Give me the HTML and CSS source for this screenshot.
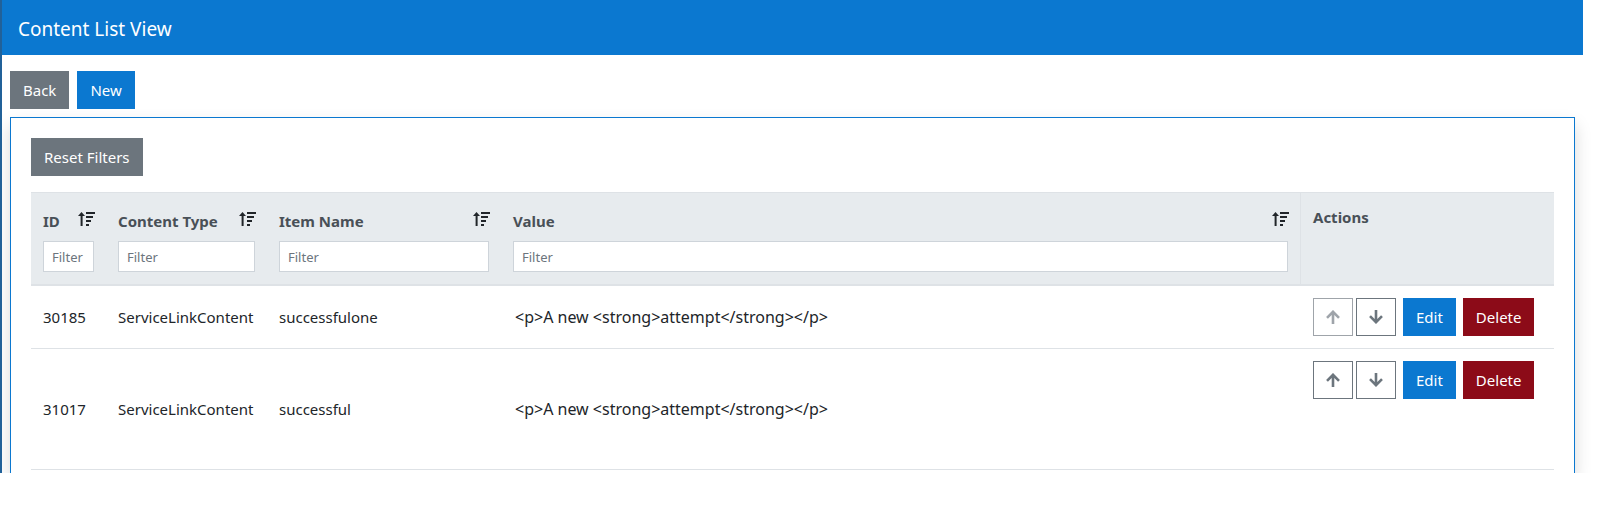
FILE: index.html
```
<!DOCTYPE html>
<html lang="en">
<head>
    <meta charset="UTF-8">
    <meta name="viewport" content="width=device-width, initial-scale=1.0">
    <title>Content List View</title>
    <link rel="stylesheet" href="styles.css">
</head>
<body>

    <svg class="sprite" aria-hidden="true">
        <symbol id="icon-sort" viewBox="0 0 18 14">
            <path d="M3.5 0 L7 4 H4.6 V14 H2.6 V4 H0 Z"/>
            <path d="M8 0 H17 V2 H8 Z M8 4 H15 V6 H8 Z M8 8 H13 V10 H8 Z M8 12 H11 V14 H8 Z"/>
        </symbol>
        <symbol id="icon-up" viewBox="0 0 14 14">
            <path d="M7 14 V1.8 M1 7.8 L7 1.8 L13 7.8" fill="none" stroke="currentColor" stroke-width="2.6"/>
        </symbol>
        <symbol id="icon-down" viewBox="0 0 14 14">
            <path d="M7 0 V12.2 M1 6.2 L7 12.2 L13 6.2" fill="none" stroke="currentColor" stroke-width="2.6"/>
        </symbol>
    </svg>

    <div class="page">
        <header class="page-header">
            <h1>Content List View</h1>
        </header>

        <main class="content">
            <div class="toolbar">
                <button type="button" class="btn btn-secondary">Back</button>
                <button type="button" class="btn btn-primary">New</button>
            </div>

            <section class="card">
                <button type="button" class="btn btn-secondary">Reset Filters</button>

                <table class="table">
                    <colgroup>
                        <col class="col-id">
                        <col class="col-type">
                        <col class="col-name">
                        <col class="col-value">
                        <col class="col-actions">
                    </colgroup>
                    <thead>
                        <tr>
                            <th>
                                <div class="th-title"><label for="filter-id">ID</label><svg class="sort"><use href="#icon-sort"/></svg></div>
                                <input type="text" id="filter-id" class="filter" placeholder="Filter">
                            </th>
                            <th>
                                <div class="th-title"><label for="filter-type">Content Type</label><svg class="sort"><use href="#icon-sort"/></svg></div>
                                <input type="text" id="filter-type" class="filter" placeholder="Filter">
                            </th>
                            <th>
                                <div class="th-title"><label for="filter-name">Item Name</label><svg class="sort"><use href="#icon-sort"/></svg></div>
                                <input type="text" id="filter-name" class="filter" placeholder="Filter">
                            </th>
                            <th>
                                <div class="th-title"><label for="filter-value">Value</label><svg class="sort"><use href="#icon-sort"/></svg></div>
                                <input type="text" id="filter-value" class="filter" placeholder="Filter">
                            </th>
                            <th class="th-actions">Actions</th>
                        </tr>
                    </thead>
                    <tbody>
                        <tr>
                            <td>30185</td>
                            <td>ServiceLinkContent</td>
                            <td>successfulone</td>
                            <td class="value">&lt;p&gt;A new &lt;strong&gt;attempt&lt;/strong&gt;&lt;/p&gt;</td>
                            <td class="actions">
                                <div class="action-group">
                                    <div class="move-group">
                                        <button type="button" class="btn btn-move" aria-label="Move up" disabled><svg class="arrow"><use href="#icon-up"/></svg></button>
                                        <button type="button" class="btn btn-move" aria-label="Move down"><svg class="arrow"><use href="#icon-down"/></svg></button>
                                    </div>
                                    <button type="button" class="btn btn-primary">Edit</button>
                                    <button type="button" class="btn btn-danger">Delete</button>
                                </div>
                            </td>
                        </tr>
                        <tr class="row-tall">
                            <td>31017</td>
                            <td>ServiceLinkContent</td>
                            <td>successful</td>
                            <td class="value">&lt;p&gt;A new &lt;strong&gt;attempt&lt;/strong&gt;&lt;/p&gt;</td>
                            <td class="actions">
                                <div class="action-group">
                                    <div class="move-group">
                                        <button type="button" class="btn btn-move" aria-label="Move up"><svg class="arrow"><use href="#icon-up"/></svg></button>
                                        <button type="button" class="btn btn-move" aria-label="Move down"><svg class="arrow"><use href="#icon-down"/></svg></button>
                                    </div>
                                    <button type="button" class="btn btn-primary">Edit</button>
                                    <button type="button" class="btn btn-danger">Delete</button>
                                </div>
                            </td>
                        </tr>
                    </tbody>
                </table>
            </section>
        </main>
    </div>

</body>
</html>
```
FILE: styles.css
```
* {
    box-sizing: border-box;
}
body {
    margin: 0;
    font-family: "Segoe UI", "Noto Sans", sans-serif;
    font-size: 15px;
    line-height: 24px;
    color: #212529;
    background-color: #fff;
}
.sprite {
    display: none;
}
.page {
    border-left: 2px solid #216199;
    overflow: hidden;
}
.page-header {
    margin-right: 21px;
    padding: 15px 16px 12px;
    background-color: #0b78d0;
    color: #fff;
}
.page-header h1 {
    margin: 0;
    font-size: 19px;
    font-weight: 400;
    line-height: 28px;
}
.content {
    padding: 16px 29px 0 8px;
}
.toolbar {
    display: flex;
    gap: 8px;
    margin-bottom: 8px;
}
.btn {
    height: 38px;
    padding: 0 12px;
    border: 1px solid transparent;
    font-family: inherit;
    font-size: 15px;
    line-height: 24px;
    color: #fff;
    cursor: pointer;
}
.btn-primary {
    background-color: #0b78d0;
    border-color: #0b78d0;
}
.btn-secondary {
    background-color: #6c757d;
    border-color: #6c757d;
}
.btn-danger {
    background-color: #8c0b18;
    border-color: #8c0b18;
}
.btn-move {
    width: 40px;
    background-color: #fff;
    border-color: #6c757d;
    color: #6c757d;
}
.btn-move:disabled {
    opacity: 0.65;
    cursor: default;
}
.card {
    padding: 20px 20px 3px;
    border: 1px solid #0b78d0;
    border-bottom: 0;
    background-color: #fff;
    box-shadow: 0 8px 16px rgba(0, 0, 0, 0.15);
}
.table {
    width: 100%;
    margin-top: 16px;
    border-collapse: separate;
    border-spacing: 0;
    table-layout: fixed;
}
.col-id {
    width: 75px;
}
.col-type {
    width: 161px;
}
.col-name {
    width: 234px;
}
.col-actions {
    width: 254px;
}
.table th {
    padding: 12px;
    border-top: 1px solid #dee2e6;
    border-bottom: 2px solid #dee2e6;
    background-color: #e7ebee;
    color: #495057;
    font-weight: 700;
    text-align: left;
    vertical-align: top;
}
.table .th-actions {
    border-left: 1px solid #dee2e6;
}
.th-title {
    display: flex;
    justify-content: space-between;
    height: 36px;
    padding-top: 4px;
}
.sort {
    width: 18px;
    height: 14px;
    margin-top: 3px;
    margin-right: -2px;
    fill: #212529;
}
.filter {
    display: block;
    width: 100%;
    height: 31px;
    padding: 4px 8px;
    border: 1px solid #ced4da;
    background-color: #fff;
    font-family: inherit;
    font-size: 13px;
    color: #495057;
}
.filter::placeholder {
    color: #6c757d;
    opacity: 1;
}
.table td {
    padding: 12px;
    border-bottom: 1px solid #dee2e6;
    vertical-align: middle;
}
.table .value {
    padding-left: 14px;
    font-size: 16px;
}
.table .actions {
    padding-left: 13px;
    vertical-align: top;
}
.row-tall td {
    height: 121px;
}
.action-group {
    display: flex;
    gap: 7px;
}
.move-group {
    display: flex;
    gap: 3px;
}
.arrow {
    display: block;
    width: 14px;
    height: 14px;
    margin: 0 auto;
}
```
